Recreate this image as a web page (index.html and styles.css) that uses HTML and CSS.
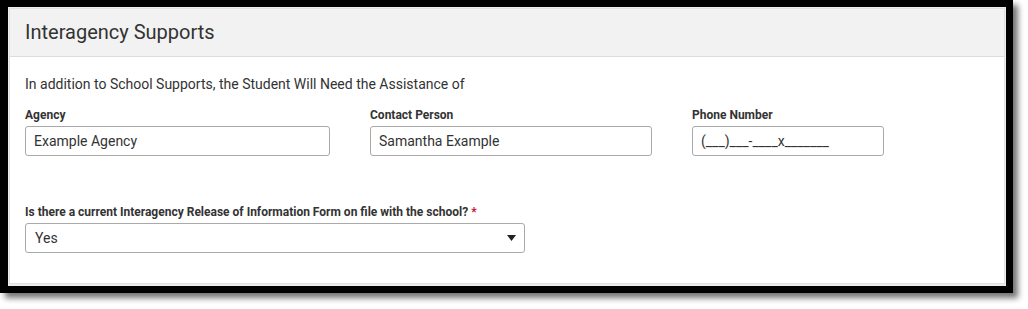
FILE: index.html
```html
<html>

<head>
    <title>Interagency Supports</title>
    <link rel="stylesheet" href="styles.css">
</head>

<body>
    <div class="frame">
        <div class="panel">
            <div class="panel-header">Interagency Supports</div>
            <div class="panel-body">
                <p class="intro">In addition to School Supports, the Student Will Need the Assistance of</p>
                <div class="row">
                    <div class="field agency">
                        <label>Agency</label>
                        <input type="text" class="input" value="Example Agency">
                    </div>
                    <div class="field contact">
                        <label>Contact Person</label>
                        <input type="text" class="input" value="Samantha Example">
                    </div>
                    <div class="field phone">
                        <label>Phone Number</label>
                        <input type="text" class="input" value="(___)___-____x_______">
                    </div>
                </div>
                <div class="field release">
                    <label>Is there a current Interagency Release of Information Form on file with the school? <span class="req">*</span></label>
                    <div class="select">
                        <span>Yes</span>
                        <svg width="9" height="6" viewBox="0 0 9 6"><path d="M0 0 L9 0 L4.5 6 Z" fill="#222" /></svg>
                    </div>
                </div>
            </div>
        </div>
    </div>
</body>

</html>
```
FILE: styles.css
```css
body {
    margin: 0;
    background: #fff;
    font-family: Roboto, "Liberation Sans", Arial, sans-serif;
    color: #333;
}

.frame {
    box-sizing: border-box;
    width: 1013px;
    height: 293px;
    border: 7px solid #000;
    border-left-width: 8px;
    box-shadow: 5px 5px 6px rgba(0, 0, 0, 0.55);
    background: #ececec;
    padding: 1px 1px 2px 1px;
}

.panel {
    box-sizing: border-box;
    height: 100%;
    border: 1px solid #e0e0e0;
    background: #fff;
}

.panel-header {
    height: 47px;
    line-height: 46px;
    padding-left: 15px;
    font-size: 20px;
    background: #f2f2f2;
    border-bottom: 1px solid #dcdcdc;
}

.panel-body {
    padding: 0 15px;
}

.intro {
    margin: 19px 0 16px 0;
    font-size: 14px;
}

.row {
    display: flex;
    gap: 40px;
}

.field label {
    display: block;
    font-size: 12px;
    font-weight: bold;
    margin-bottom: 4px;
}

.input {
    box-sizing: border-box;
    width: 100%;
    height: 30px;
    border: 1px solid #a9a9a9;
    border-radius: 3px;
    padding: 0 8px;
    font-family: inherit;
    font-size: 14px;
    color: #333;
}

.agency {
    width: 305px;
}

.contact {
    width: 282px;
}

.phone {
    width: 192px;
}

.release {
    margin-top: 49px;
    width: 500px;
}

.req {
    color: #c8102e;
}

.select {
    box-sizing: border-box;
    height: 30px;
    border: 1px solid #a9a9a9;
    border-radius: 3px;
    padding: 0 8px 0 9px;
    display: flex;
    align-items: center;
    justify-content: space-between;
    font-size: 14px;
    background: #fff;
}
```
